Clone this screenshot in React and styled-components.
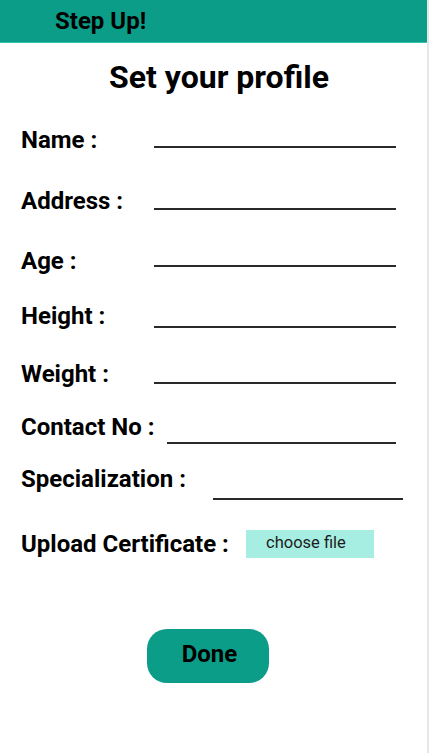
import React from 'react';
import styled, { createGlobalStyle } from 'styled-components';

const GlobalStyle = createGlobalStyle`
  body {
    margin: 0;
    background: #fff;
    font-family: Roboto, "Liberation Sans", sans-serif;
  }
`;

const Page = styled.div`
  width: 427px;
  min-height: 753px;
  border-right: 2px solid #e6e6e6;
  display: flex;
  flex-direction: column;
`;

const Header = styled.header`
  height: 43px;
  background: #0b9d87;
  border-bottom: 1px solid #34c4ab;
  display: flex;
  align-items: center;
  padding-left: 55px;
  box-sizing: border-box;
`;

const Brand = styled.span`
  font-size: 24px;
  font-weight: 700;
  color: #000;
  line-height: 1;
`;

const Title = styled.h1`
  margin: 15px 0 0;
  padding-left: 11px;
  text-align: center;
  font-size: 32px;
  line-height: 38px;
  font-weight: 700;
  color: #000;
`;

const Form = styled.div`
  display: flex;
  flex-direction: column;
  padding-left: 21px;
  margin-top: 30px;
`;

const Row = styled.div`
  display: flex;
  align-items: flex-start;
  height: 28px;
  margin-top: ${p => p.space}px;
`;

const Label = styled.label`
  flex: none;
  width: ${p => p.width}px;
  font-size: 24px;
  line-height: 28px;
  font-weight: 700;
  color: #000;
  white-space: nowrap;
`;

const Underline = styled.div`
  flex: none;
  width: ${p => p.length}px;
  height: 0;
  border-bottom: 2px solid #2a2a2a;
  margin-top: ${p => 20 + p.drop}px;
`;

const UploadRow = styled.div`
  display: flex;
  align-items: center;
  height: 28px;
  margin-top: 37px;
`;

const FileButton = styled.button`
  width: 128px;
  height: 28px;
  border: none;
  background: #a7eee2;
  font-family: Roboto, "Liberation Sans", sans-serif;
  font-size: 16.5px;
  color: #1c1c1c;
  text-align: left;
  padding: 0 0 4px 20px;
`;

const Actions = styled.div`
  display: flex;
  padding-left: 147px;
  margin-top: 71px;
`;

const DoneButton = styled.button`
  width: 122px;
  height: 54px;
  border: none;
  border-radius: 20px;
  background: #0b9d87;
  font-family: Roboto, "Liberation Sans", sans-serif;
  font-size: 24px;
  font-weight: 700;
  color: #000;
  padding: 0 0 4px 3px;
`;

const fields = [
  { label: 'Name :', space: 0, width: 133, length: 242, drop: 0 },
  { label: 'Address :', space: 33, width: 133, length: 242, drop: 1 },
  { label: 'Age :', space: 32, width: 133, length: 242, drop: -2 },
  { label: 'Height :', space: 27, width: 133, length: 242, drop: 4 },
  { label: 'Weight :', space: 30, width: 133, length: 242, drop: 2 },
  { label: 'Contact No :', space: 25, width: 146, length: 229, drop: 9 },
  { label: 'Specialization :', space: 24, width: 192, length: 190, drop: 13 },
];

const App = () => (
  <Page>
    <GlobalStyle />
    <Header>
      <Brand>Step Up!</Brand>
    </Header>
    <Title>Set your profile</Title>
    <Form>
      {fields.map(f => (
        <Row key={f.label} space={f.space}>
          <Label width={f.width}>{f.label}</Label>
          <Underline length={f.length} drop={f.drop} />
        </Row>
      ))}
      <UploadRow>
        <Label width={225}>Upload Certificate :</Label>
        <FileButton>choose file</FileButton>
      </UploadRow>
    </Form>
    <Actions>
      <DoneButton>Done</DoneButton>
    </Actions>
  </Page>
);

export default App;
